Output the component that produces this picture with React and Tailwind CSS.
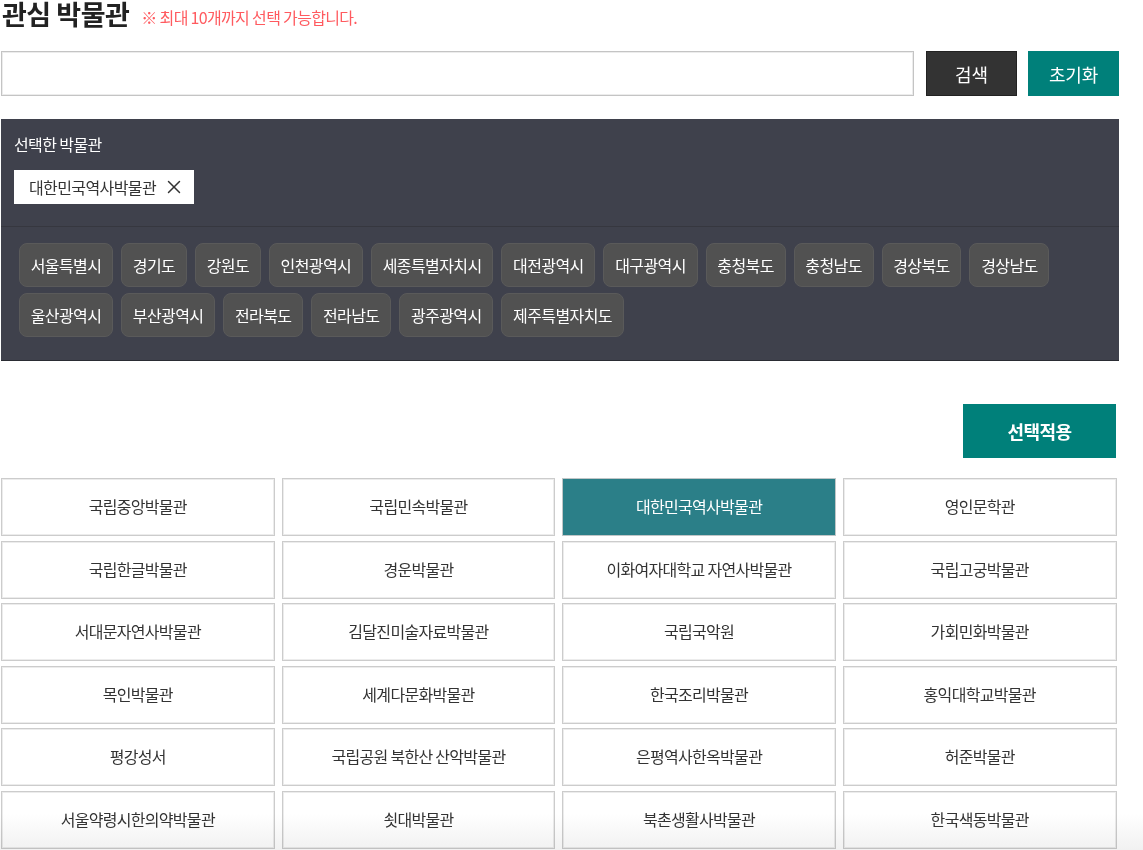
import { X } from 'lucide-react'

const regions = [
  ['서울특별시', '경기도', '강원도', '인천광역시', '세종특별자치시', '대전광역시', '대구광역시', '충청북도', '충청남도', '경상북도', '경상남도'],
  ['울산광역시', '부산광역시', '전라북도', '전라남도', '광주광역시', '제주특별자치도'],
]

const museums = [
  '국립중앙박물관', '국립민속박물관', '대한민국역사박물관', '영인문학관',
  '국립한글박물관', '경운박물관', '이화여자대학교 자연사박물관', '국립고궁박물관',
  '서대문자연사박물관', '김달진미술자료박물관', '국립국악원', '가회민화박물관',
  '목인박물관', '세계다문화박물관', '한국조리박물관', '홍익대학교박물관',
  '평강성서', '국립공원 북한산 산악박물관', '은평역사한옥박물관', '허준박물관',
  '서울약령시한의약박물관', '쇳대박물관', '북촌생활사박물관', '한국색동박물관',
]

export default function App() {
  return (
    <div className="relative h-[850px] w-[1143px] overflow-hidden bg-white font-['Noto_Sans_CJK_KR','Noto_Sans',sans-serif] text-[#222]">
      <div className="flex h-[51px] items-start pl-[2px]">
        <h1 className="mt-px text-[27px] leading-[26px] font-bold tracking-[-0.5px] text-[#222]">관심 박물관</h1>
        <p className="mt-[6px] ml-[12px] text-base leading-[22px] tracking-[-0.67px] text-[#ff5a5f]">※ 최대 10개까지 선택 가능합니다.</p>
      </div>

      <div className="flex h-[45px] pl-px">
        <input className="h-full w-[913px] border border-[#c4c4c4] bg-white shadow-[inset_0_0_0_1px_#ececec]" />
        <button className="ml-3 h-full w-[91px] border border-[#222] bg-[#333] text-lg text-white">검색</button>
        <button className="ml-[11px] h-full w-[91px] bg-[#00807a] text-lg tracking-[-0.2px] text-white">초기화</button>
      </div>

      <div className="mt-[23px] ml-px h-[242px] w-[1118px] border-b border-[#2a2c33] bg-[#3f414c]">
        <div className="h-[108px] border-b border-[#36373f] pt-[14px] pl-[13px]">
          <p className="text-base leading-[22px] tracking-[-0.6px] text-white">선택한 박물관</p>
          <div className="mt-[15px] flex h-[34px] w-[180px] items-center bg-white pl-[15px] text-base tracking-[-0.6px] text-[#333]">
            대한민국역사박물관
            <X className="ml-[7px] h-[22px] w-[22px] shrink-0 text-[#333]" strokeWidth={1.6} />
          </div>
        </div>
        <div className="flex flex-col gap-[6px] pt-[16px] pl-[18px]">
          {regions.map((row, i) => (
            <div key={i} className="flex gap-2">
              {row.map((r) => (
                <span key={r} className="flex h-[44px] items-center rounded-lg border border-[#5a5a5a] bg-[#515151] px-[10.75px] text-base tracking-[-0.6px] text-white">
                  {r}
                </span>
              ))}
            </div>
          ))}
        </div>
      </div>

      <div className="mt-[43px] flex justify-end pr-[27px]">
        <button className="h-[54px] w-[153px] bg-[#00807a] text-lg font-bold tracking-[-0.5px] text-white">선택적용</button>
      </div>

      <div className="mt-[20px] ml-px grid w-[1115.5px] grid-cols-4 gap-x-[7px] gap-y-[4.5px]">
        {museums.map((m) => {
          const active = m === '대한민국역사박물관'
          return (
            <div
              key={m}
              className={`flex h-[58px] items-center justify-center border pb-[2px] text-base tracking-[-0.7px] ${
                active ? 'border-[#c0c6c7] bg-[#2b7f88] text-white' : 'border-[#cccccc] bg-white text-[#333] shadow-[inset_0_0_0_1px_#ececec]'
              }`}
            >
              {m}
            </div>
          )
        })}
      </div>

      <div className="pointer-events-none absolute right-0 bottom-0 left-0 h-[36px] bg-gradient-to-b from-white to-[#f1f1f1] mix-blend-multiply" />
    </div>
  )
}
